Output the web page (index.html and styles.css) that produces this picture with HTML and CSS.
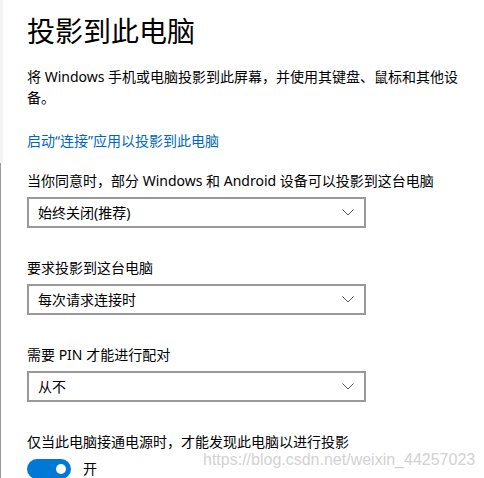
FILE: index.html
```html
<!DOCTYPE html>
<html lang="zh-CN">
	<head>
		<meta charset="UTF-8">
		<meta name="viewport" content="width=device-width, initial-scale=1">
		<link rel="stylesheet" href="styles.css">
	</head>

	<body>
		<div class="page">
			<h1 class="title">投影到此电脑</h1>
			<p class="desc">将 Windows 手机或电脑投影到此屏幕，并使用其键盘、鼠标和其他设备。</p>
			<a class="link" href="#">启动“连接”应用以投影到此电脑</a>

			<div class="field">
				<div class="label">当你同意时，部分 Windows 和 Android 设备可以投影到这台电脑</div>
				<div class="select">
					<span>始终关闭(推荐)</span>
					<svg class="chevron" width="12" height="7" viewBox="0 0 12 7"><path d="M0.5 0.5 L6 6 L11.5 0.5" fill="none" stroke="#555" stroke-width="1"/></svg>
				</div>
			</div>

			<div class="field">
				<div class="label">要求投影到这台电脑</div>
				<div class="select">
					<span>每次请求连接时</span>
					<svg class="chevron" width="12" height="7" viewBox="0 0 12 7"><path d="M0.5 0.5 L6 6 L11.5 0.5" fill="none" stroke="#555" stroke-width="1"/></svg>
				</div>
			</div>

			<div class="field">
				<div class="label">需要 PIN 才能进行配对</div>
				<div class="select">
					<span>从不</span>
					<svg class="chevron" width="12" height="7" viewBox="0 0 12 7"><path d="M0.5 0.5 L6 6 L11.5 0.5" fill="none" stroke="#555" stroke-width="1"/></svg>
				</div>
			</div>

			<div class="field">
				<div class="label">仅当此电脑接通电源时，才能发现此电脑以进行投影</div>
				<div class="toggleRow">
					<span class="toggle"><span class="knob"></span></span>
					<span class="toggleText">开</span>
				</div>
			</div>

			<div class="watermark">https://blog.csdn.net/weixin_44257023</div>
		</div>
	</body>
</html>
```

FILE: styles.css
```css
html, body {
	margin: 0;
	padding: 0;
	background-color: #fff;
}

body {
	font-family: "Noto Sans", "Noto Sans CJK SC", sans-serif;
	font-size: 14px;
	line-height: 21px;
	color: #000;
	overflow: hidden;
}

/*---------------------------PAGE---------------------------*/
.page {
	position: relative;
	height: 478px;
	padding: 14px 0 0 27px;
	box-sizing: border-box;
}

/* window edge on the left */
.page::before {
	content: "";
	position: absolute;
	left: 0;
	top: 0;
	width: 3px;
	height: 163px;
	background-color: #f3f3f3;
}

.page::after {
	content: "";
	position: absolute;
	left: 0;
	top: 163px;
	bottom: 0;
	width: 1px;
	background-color: #9a9a9a;
}

.title {
	margin: 0;
	font-size: 28px;
	line-height: 34px;
	font-weight: normal;
}

.desc {
	margin: 18px 0 0 0;
	width: 436px;
}

.link {
	display: block;
	margin-top: 22px;
	color: #0067c0;
	text-decoration: none;
}

/*---------------------------FIELDS---------------------------*/
.field {
	margin-top: 19px;
	display: flex;
	flex-direction: column;
	gap: 6px;
}

.field + .field {
	margin-top: 29px;
}

.select {
	width: 339px;
	height: 31px;
	box-sizing: border-box;
	border: 2px solid #999;
	display: flex;
	align-items: center;
	justify-content: space-between;
	padding: 0 10px 0 9px;
}

.chevron {
	display: block;
}

/*---------------------------TOGGLE---------------------------*/
.toggleRow {
	display: flex;
	align-items: center;
	gap: 12px;
}

.toggle {
	width: 44px;
	height: 20px;
	border-radius: 10px;
	background-color: #0078d7;
	display: flex;
	align-items: center;
	justify-content: flex-end;
	padding: 0 5px;
	box-sizing: border-box;
}

.knob {
	width: 10px;
	height: 10px;
	border-radius: 50%;
	background-color: #fff;
}

/*---------------------------WATERMARK---------------------------*/
.watermark {
	position: absolute;
	left: 203px;
	top: 449px;
	font-family: "Liberation Sans", sans-serif;
	font-size: 16px;
	line-height: 22px;
	color: #d2d2d2;
	text-shadow: 0 0 1px #fff;
}
```
